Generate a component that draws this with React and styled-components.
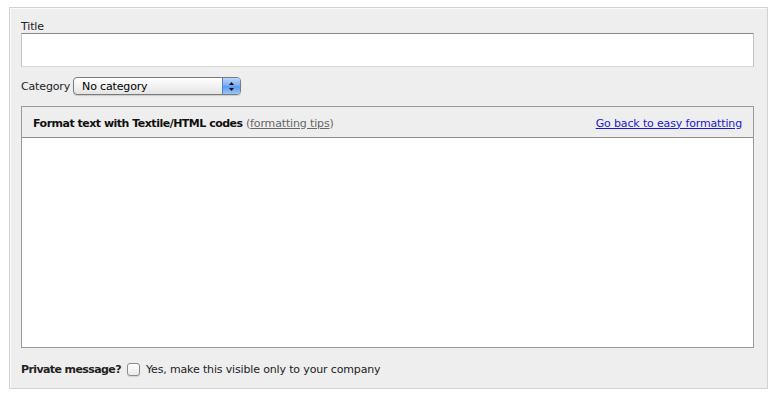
import React from "react";
import styled, { createGlobalStyle } from "styled-components";

const Global = createGlobalStyle`
  html, body { margin: 0; padding: 0; background: #fff; }
  body { font-family: "DejaVu Sans", "Liberation Sans", sans-serif; font-size: 11px; letter-spacing: -0.15px; color: #111; }
  #root { padding: 7px 7px 6px 9px; }
`;

const Panel = styled.form`
  box-sizing: border-box;
  width: 759px;
  height: 382px;
  background: #eeeeee;
  border: 1px solid #d2d2d2;
  box-shadow: inset 1px 1px 0 #fbfbfb;
  padding: 12px 13px 0 11px;
  display: flex;
  flex-direction: column;
`;

const Label = styled.label`
  display: block;
  font-size: 11px;
  line-height: 13px;
  color: #222;
  font-weight: ${(p) => (p.$bold ? "bold" : "normal")};
  letter-spacing: ${(p) => (p.$bold ? "-0.6px" : "-0.15px")};
`;

const TitleInput = styled.input`
  box-sizing: border-box;
  width: 733px;
  height: 34px;
  background: #fff;
  border: 1px solid #c4c4c4;
  border-top-color: #8a8a8a;
  border-bottom-color: #d8d8d8;
  outline: none;
  padding: 0 4px;
  font: inherit;
`;

const CategoryRow = styled.div`
  display: flex;
  align-items: center;
  gap: 3px;
  margin-top: 10px;
  height: 18px;
`;

const Select = styled.div`
  box-sizing: border-box;
  width: 168px;
  height: 18px;
  border: 1px solid #7b7b7b;
  border-radius: 4px;
  background: linear-gradient(#ffffff, #f1f1f1 55%, #e4e4e4);
  display: flex;
  align-items: center;
  overflow: hidden;
  box-shadow: 0 1px 1px rgba(0,0,0,0.15);
`;

const SelectText = styled.span`
  flex: 1;
  padding-left: 8px;
  font-size: 11px;
  color: #000;
`;

const Stepper = styled.span`
  width: 17px;
  height: 100%;
  border-left: 1px solid #5a7fc0;
  background: linear-gradient(#b9d6fb, #7eb1f4 45%, #5b99ef 55%, #9cc6fa);
  display: flex;
  align-items: center;
  justify-content: center;
`;

const FormatBox = styled.div`
  box-sizing: border-box;
  margin-top: 11px;
  width: 733px;
  height: 242px;
  border: 1px solid #9a9a9a;
  display: flex;
  flex-direction: column;
  background: #fff;
`;

const FormatHeader = styled.div`
  height: 31px;
  background: #eeeeee;
  border-bottom: 1px solid #8f8f8f;
  display: flex;
  align-items: center;
  justify-content: space-between;
  padding: 0 11px 0 11px;
  box-sizing: border-box;
`;

const HeaderTitle = styled.span`
  font-weight: bold;
  letter-spacing: -0.5px;
  color: #111;
  padding-top: 2px;
`;

const Tips = styled.span`
  font-weight: normal;
  letter-spacing: -0.15px;
  color: #666;
  a { color: #666; text-decoration: underline; }
`;

const BackLink = styled.a`
  color: #1a1acc;
  text-decoration: underline;
  padding-top: 2px;
`;

const TextArea = styled.textarea`
  flex: 1;
  border: none;
  outline: none;
  resize: none;
  padding: 4px;
  font: inherit;
`;

const PrivateRow = styled.div`
  display: flex;
  align-items: center;
  margin-top: 13px;
  height: 16px;
`;

const Check = styled.span`
  box-sizing: border-box;
  width: 13px;
  height: 13px;
  margin: 0 6px 0 6px;
  border: 1px solid #8c8c8c;
  border-radius: 3px;
  background: linear-gradient(#ffffff, #eaeaea);
  box-shadow: 0 1px 1px rgba(0,0,0,0.12);
`;

export default function App() {
  return (
    <>
      <Global />
      <Panel>
        <Label>Title</Label>
        <TitleInput type="text" />
        <CategoryRow>
          <Label>Category</Label>
          <Select>
            <SelectText>No category</SelectText>
            <Stepper>
              <svg width="7" height="11" viewBox="0 0 7 11">
                <path d="M3.5 1 L6 4 L1 4 Z" fill="#111" />
                <path d="M3.5 10 L6 7 L1 7 Z" fill="#111" />
              </svg>
            </Stepper>
          </Select>
        </CategoryRow>
        <FormatBox>
          <FormatHeader>
            <HeaderTitle>
              Format text with Textile/HTML codes{" "}
              <Tips>
                (<a href="#tips">formatting tips</a>)
              </Tips>
            </HeaderTitle>
            <BackLink href="#easy">Go back to easy formatting</BackLink>
          </FormatHeader>
          <TextArea />
        </FormatBox>
        <PrivateRow>
          <Label $bold>Private message?</Label>
          <Check />
          <Label>Yes, make this visible only to your company</Label>
        </PrivateRow>
      </Panel>
    </>
  );
}
